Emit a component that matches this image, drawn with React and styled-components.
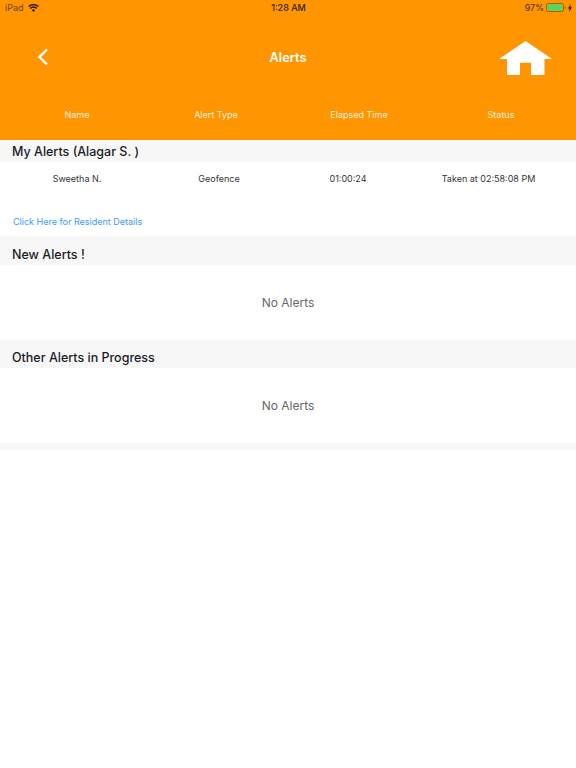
import React from 'react';
import styled, { createGlobalStyle } from 'styled-components';

const GlobalStyle = createGlobalStyle`
  html, body {
    margin: 0;
    padding: 0;
    background: #fff;
    font-family: Inter, "Liberation Sans", sans-serif;
  }
`;

const Page = styled.div`
  width: 576px;
  height: 768px;
  overflow: hidden;
  background: #fff;
`;

const Header = styled.header`
  height: 140px;
  background: #ff9500;
  display: flex;
  flex-direction: column;
`;

const StatusBar = styled.div`
  height: 15px;
  padding: 0 4px 0 5px;
  display: grid;
  grid-template-columns: 1fr auto 1fr;
  align-items: center;
  font-size: 9px;
  color: #2e1d00;
`;

const StatusLeft = styled.div`
  display: flex;
  align-items: center;
  gap: 4px;
  color: #6b4400;
`;

const StatusRight = styled.div`
  display: flex;
  align-items: center;
  justify-content: flex-end;
  gap: 2px;
  color: #4a2f00;
`;

const Clock = styled.div`
  font-weight: 500;
`;

const NavBar = styled.div`
  height: 84px;
  padding: 0 24px;
  display: grid;
  grid-template-columns: 1fr auto 1fr;
  align-items: center;
`;

const BackSlot = styled.div`
  padding-left: 12px;
  display: flex;
`;

const NavTitle = styled.div`
  font-size: 12.75px;
  font-weight: 600;
  color: #fff;
`;

const HomeSlot = styled.div`
  padding-top: 2px;
  display: flex;
  justify-content: flex-end;
`;

const Columns = styled.div`
  display: grid;
  grid-template-columns: ${(p) => p.$cols};
  text-align: center;
`;

const HeaderColumns = styled(Columns)`
  margin-top: auto;
  padding-bottom: 18px;
`;

const HeaderCell = styled.div`
  font-size: 9px;
  line-height: 14px;
  color: #fff0dc;
`;

const SectionTitle = styled.h2`
  margin: 0;
  height: ${(p) => p.$height}px;
  padding: 0 12px;
  box-sizing: border-box;
  display: flex;
  align-items: flex-end;
  background: #f7f7f7;
  font-size: 12.5px;
  line-height: 20px;
  font-weight: 500;
  color: #1c1c1e;
`;

const Row = styled.div`
  padding-top: 9px;
  height: 52px;
  box-sizing: border-box;
`;

const RowCell = styled.div`
  font-size: 9px;
  line-height: 15px;
  color: #333;
`;

const DetailsLink = styled.a`
  display: block;
  padding-left: 13px;
  height: 22px;
  font-size: 9px;
  line-height: 15px;
  color: #3b9bfa;
`;

const Empty = styled.div`
  height: 75px;
  display: flex;
  align-items: center;
  justify-content: center;
  font-size: 12px;
  color: #666;
`;

const FooterBand = styled.div`
  height: 7px;
  background: #f7f7f7;
`;

const Wifi = () => (
  <svg width="11" height="8" viewBox="0 0 12 9">
    <path fill="#1f1400" d="M6 9 4.100 6.900a2.800 2.800 0 0 1 3.800 0L6 9ZM2.900 5.600 1.700 4.300a6.300 6.300 0 0 1 8.600 0L9.100 5.600a4.600 4.600 0 0 0-6.200 0ZM.9 3.400 0 2.300a8.900 8.900 0 0 1 12 0l-.9 1.100a7.600 7.600 0 0 0-10.200 0Z" />
  </svg>
);

const Battery = () => (
  <svg width="20" height="9" viewBox="0 0 20 9">
    <rect x="0.5" y="0.5" width="17" height="8" rx="1.800" fill="none" stroke="#a76200" />
    <rect x="1.500" y="1.500" width="15" height="6" rx="0.800" fill="#4cd964" />
    <path d="M18.600 3v3c.7 0 1.200-.7 1.200-1.500S19.300 3 18.600 3Z" fill="#a76200" />
  </svg>
);

const Bolt = () => (
  <svg width="4" height="8" viewBox="0 0 4 8">
    <path fill="#2e1d00" d="M2.600 0 0 4.500h1.600L1.200 8 4 3.200H2.300L2.600 0Z" />
  </svg>
);

const BackIcon = () => (
  <svg width="14" height="18" viewBox="0 0 14 18">
    <path d="M11 1.500 3.500 9 11 16.500" fill="none" stroke="#fff" strokeWidth="2.400" />
  </svg>
);

const HomeIcon = () => (
  <svg width="53" height="34" viewBox="0 0 53 34">
    <path fill="#fff" d="M26.500 0 53 18H45.500V34H32V21.700H21V34H8V18H0Z" />
  </svg>
);

const headerCols = '154px 124px 162px 122px';
const rowCols = '154px 130px 128px 153px';

function Section({ title, height, children }) {
  return (
    <section>
      <SectionTitle $height={height}>{title}</SectionTitle>
      {children}
    </section>
  );
}

export default function App() {
  return (
    <Page>
      <GlobalStyle />
      <Header>
        <StatusBar>
          <StatusLeft>
            <span>iPad</span>
            <Wifi />
          </StatusLeft>
          <Clock>1:28 AM</Clock>
          <StatusRight>
            <span>97%</span>
            <Battery />
            <Bolt />
          </StatusRight>
        </StatusBar>
        <NavBar>
          <BackSlot>
            <BackIcon />
          </BackSlot>
          <NavTitle>Alerts</NavTitle>
          <HomeSlot>
            <HomeIcon />
          </HomeSlot>
        </NavBar>
        <HeaderColumns $cols={headerCols}>
          <HeaderCell>Name</HeaderCell>
          <HeaderCell>Alert Type</HeaderCell>
          <HeaderCell>Elapsed Time</HeaderCell>
          <HeaderCell>Status</HeaderCell>
        </HeaderColumns>
      </Header>

      <Section title="My Alerts (Alagar S. )" height={22}>
        <Row>
          <Columns $cols={rowCols}>
            <RowCell>Sweetha N.</RowCell>
            <RowCell>Geofence</RowCell>
            <RowCell>01:00:24</RowCell>
            <RowCell>Taken at 02:58:08 PM</RowCell>
          </Columns>
        </Row>
        <DetailsLink>Click Here for Resident Details</DetailsLink>
      </Section>

      <Section title="New Alerts !" height={29}>
        <Empty>No Alerts</Empty>
      </Section>

      <Section title="Other Alerts in Progress" height={28}>
        <Empty>No Alerts</Empty>
      </Section>

      <FooterBand />
    </Page>
  );
}
